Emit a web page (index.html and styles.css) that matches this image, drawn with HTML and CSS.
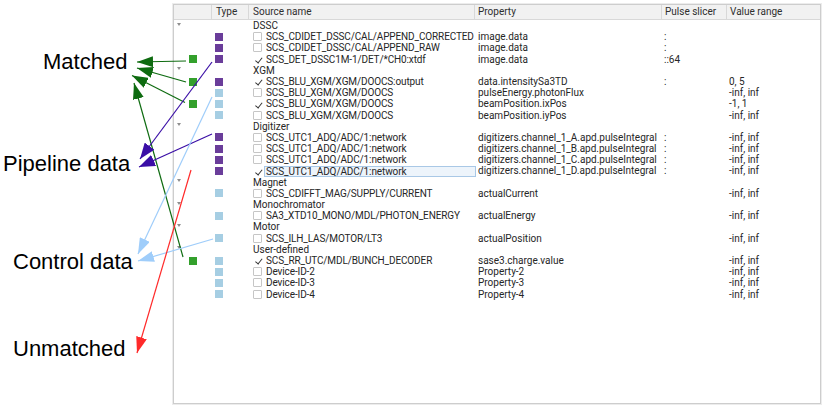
FILE: index.html
```html
<!DOCTYPE html>
<html>
<head>
<meta charset="utf-8">
<link rel="stylesheet" href="styles.css">
</head>
<body>
<div class="page">
  <div class="annot">
    <div class="label l-matched">Matched</div>
    <div class="label l-pipeline">Pipeline data</div>
    <div class="label l-control">Control data</div>
    <div class="label l-unmatched">Unmatched</div>
  </div>
  <div class="frame">
    <div class="panel">
      <div class="thead">
        <div class="th"></div>
        <div class="th t-in">Type</div>
        <div class="th t-in">Source name</div>
        <div class="th">Property</div>
        <div class="th">Pulse slicer</div>
        <div class="th">Value range</div>
      </div>
      <div class="tbody">
        <div class="row"><span class="c0"><i class="twisty"></i></span><span class="c1"></span><span class="c2">DSSC</span><span class="c3"></span><span class="c4"></span><span class="c5"></span></div>
        <div class="row"><span class="c0"></span><span class="c1"><i class="sq pipe"></i></span><span class="c2"><i class="cb"></i><span class="nm">SCS_CDIDET_DSSC/CAL/APPEND_CORRECTED</span></span><span class="c3">image.data</span><span class="c4">:</span><span class="c5"></span></div>
        <div class="row"><span class="c0"></span><span class="c1"><i class="sq pipe"></i></span><span class="c2"><i class="cb"></i><span class="nm">SCS_CDIDET_DSSC/CAL/APPEND_RAW</span></span><span class="c3">image.data</span><span class="c4">:</span><span class="c5"></span></div>
        <div class="row"><span class="c0"><i class="sq match"></i></span><span class="c1"><i class="sq pipe"></i></span><span class="c2"><i class="cb on"></i><span class="nm">SCS_DET_DSSC1M-1/DET/*CH0:xtdf</span></span><span class="c3">image.data</span><span class="c4">::64</span><span class="c5"></span></div>

        <div class="row"><span class="c0"><i class="twisty"></i></span><span class="c1"></span><span class="c2">XGM</span><span class="c3"></span><span class="c4"></span><span class="c5"></span></div>
        <div class="row"><span class="c0"><i class="sq match"></i></span><span class="c1"><i class="sq pipe"></i></span><span class="c2"><i class="cb on"></i><span class="nm">SCS_BLU_XGM/XGM/DOOCS:output</span></span><span class="c3">data.intensitySa3TD</span><span class="c4">:</span><span class="c5">0, 5</span></div>
        <div class="row"><span class="c0"></span><span class="c1"><i class="sq ctrl"></i></span><span class="c2"><i class="cb"></i><span class="nm">SCS_BLU_XGM/XGM/DOOCS</span></span><span class="c3">pulseEnergy.photonFlux</span><span class="c4"></span><span class="c5">-inf, inf</span></div>
        <div class="row"><span class="c0"><i class="sq match"></i></span><span class="c1"><i class="sq ctrl"></i></span><span class="c2"><i class="cb on"></i><span class="nm">SCS_BLU_XGM/XGM/DOOCS</span></span><span class="c3">beamPosition.ixPos</span><span class="c4"></span><span class="c5">-1, 1</span></div>
        <div class="row"><span class="c0"></span><span class="c1"><i class="sq ctrl"></i></span><span class="c2"><i class="cb"></i><span class="nm">SCS_BLU_XGM/XGM/DOOCS</span></span><span class="c3">beamPosition.iyPos</span><span class="c4"></span><span class="c5">-inf, inf</span></div>

        <div class="row"><span class="c0"><i class="twisty"></i></span><span class="c1"></span><span class="c2">Digitizer</span><span class="c3"></span><span class="c4"></span><span class="c5"></span></div>
        <div class="row"><span class="c0"></span><span class="c1"><i class="sq pipe"></i></span><span class="c2"><i class="cb"></i><span class="nm">SCS_UTC1_ADQ/ADC/1:network</span></span><span class="c3">digitizers.channel_1_A.apd.pulseIntegral</span><span class="c4">:</span><span class="c5">-inf, inf</span></div>
        <div class="row"><span class="c0"></span><span class="c1"><i class="sq pipe"></i></span><span class="c2"><i class="cb"></i><span class="nm">SCS_UTC1_ADQ/ADC/1:network</span></span><span class="c3">digitizers.channel_1_B.apd.pulseIntegral</span><span class="c4">:</span><span class="c5">-inf, inf</span></div>
        <div class="row"><span class="c0"></span><span class="c1"><i class="sq pipe"></i></span><span class="c2"><i class="cb"></i><span class="nm">SCS_UTC1_ADQ/ADC/1:network</span></span><span class="c3">digitizers.channel_1_C.apd.pulseIntegral</span><span class="c4">:</span><span class="c5">-inf, inf</span></div>
        <div class="row"><span class="c0"></span><span class="c1"><i class="sq pipe"></i></span><span class="c2"><i class="cb on"></i><span class="nm sel">SCS_UTC1_ADQ/ADC/1:network</span></span><span class="c3">digitizers.channel_1_D.apd.pulseIntegral</span><span class="c4">:</span><span class="c5">-inf, inf</span></div>

        <div class="row"><span class="c0"><i class="twisty"></i></span><span class="c1"></span><span class="c2">Magnet</span><span class="c3"></span><span class="c4"></span><span class="c5"></span></div>
        <div class="row"><span class="c0"></span><span class="c1"><i class="sq ctrl"></i></span><span class="c2"><i class="cb"></i><span class="nm">SCS_CDIFFT_MAG/SUPPLY/CURRENT</span></span><span class="c3">actualCurrent</span><span class="c4"></span><span class="c5">-inf, inf</span></div>

        <div class="row"><span class="c0"><i class="twisty"></i></span><span class="c1"></span><span class="c2">Monochromator</span><span class="c3"></span><span class="c4"></span><span class="c5"></span></div>
        <div class="row"><span class="c0"></span><span class="c1"><i class="sq ctrl"></i></span><span class="c2"><i class="cb"></i><span class="nm">SA3_XTD10_MONO/MDL/PHOTON_ENERGY</span></span><span class="c3">actualEnergy</span><span class="c4"></span><span class="c5">-inf, inf</span></div>

        <div class="row"><span class="c0"><i class="twisty"></i></span><span class="c1"></span><span class="c2">Motor</span><span class="c3"></span><span class="c4"></span><span class="c5"></span></div>
        <div class="row"><span class="c0"></span><span class="c1"><i class="sq ctrl"></i></span><span class="c2"><i class="cb"></i><span class="nm">SCS_ILH_LAS/MOTOR/LT3</span></span><span class="c3">actualPosition</span><span class="c4"></span><span class="c5">-inf, inf</span></div>

        <div class="row"><span class="c0"><i class="twisty"></i></span><span class="c1"></span><span class="c2">User-defined</span><span class="c3"></span><span class="c4"></span><span class="c5"></span></div>
        <div class="row"><span class="c0"><i class="sq match"></i></span><span class="c1"><i class="sq ctrl"></i></span><span class="c2"><i class="cb on"></i><span class="nm">SCS_RR_UTC/MDL/BUNCH_DECODER</span></span><span class="c3">sase3.charge.value</span><span class="c4"></span><span class="c5">-inf, inf</span></div>
        <div class="row"><span class="c0"></span><span class="c1"><i class="sq ctrl"></i></span><span class="c2"><i class="cb"></i><span class="nm">Device-ID-2</span></span><span class="c3">Property-2</span><span class="c4"></span><span class="c5">-inf, inf</span></div>
        <div class="row"><span class="c0"></span><span class="c1"><i class="sq ctrl"></i></span><span class="c2"><i class="cb"></i><span class="nm">Device-ID-3</span></span><span class="c3">Property-3</span><span class="c4"></span><span class="c5">-inf, inf</span></div>
        <div class="row"><span class="c0"></span><span class="c1"><i class="sq ctrl"></i></span><span class="c2"><i class="cb"></i><span class="nm">Device-ID-4</span></span><span class="c3">Property-4</span><span class="c4"></span><span class="c5">-inf, inf</span></div>
      </div>
    </div>
  </div>
  <svg class="arrows" width="824" height="409" viewBox="0 0 824 409">
    <defs>
      <marker id="hg" markerUnits="userSpaceOnUse" markerWidth="16" markerHeight="11" refX="16" refY="5.5" orient="auto"><path d="M0,0 L16,5.5 L0,11 z" fill="#0e6b10"/></marker>
      <marker id="hp" markerUnits="userSpaceOnUse" markerWidth="16" markerHeight="12" refX="16" refY="6" orient="auto"><path d="M0,0 L16,6 L0,12 z" fill="#3a0ea6"/></marker>
      <marker id="hb" markerUnits="userSpaceOnUse" markerWidth="16" markerHeight="11" refX="16" refY="5.5" orient="auto"><path d="M0,0 L16,5.5 L0,11 z" fill="#9fcdfa"/></marker>
      <marker id="hr" markerUnits="userSpaceOnUse" markerWidth="16" markerHeight="11" refX="16" refY="5.5" orient="auto"><path d="M0,0 L16,5.5 L0,11 z" fill="#ff2a2a"/></marker>
    </defs>
    <g fill="none" stroke-width="1.2">
      <line x1="186" y1="61" x2="137" y2="62" stroke="#0e6b10" marker-end="url(#hg)"/>
      <line x1="186" y1="82" x2="137" y2="68" stroke="#0e6b10" marker-end="url(#hg)"/>
      <line x1="185" y1="102.5" x2="132" y2="75.5" stroke="#0e6b10" marker-end="url(#hg)"/>
      <line x1="183" y1="257" x2="134" y2="83" stroke="#0e6b10" marker-end="url(#hg)"/>
      <line x1="212" y1="62" x2="140" y2="159" stroke="#3a0ea6" marker-end="url(#hp)"/>
      <line x1="212" y1="134" x2="139" y2="167" stroke="#3a0ea6" marker-end="url(#hp)"/>
      <line x1="212" y1="97" x2="138" y2="254" stroke="#9fcdfa" marker-end="url(#hb)"/>
      <line x1="213" y1="239" x2="138" y2="261" stroke="#9fcdfa" marker-end="url(#hb)"/>
      <line x1="191" y1="170" x2="137" y2="353" stroke="#ff2a2a" marker-end="url(#hr)"/>
    </g>
  </svg>
</div>
</body>
</html>
```
FILE: styles.css
```css
* { box-sizing: border-box; }
body { margin: 0; background: #fff; }

.page {
  position: relative;
  width: 824px;
  height: 409px;
  display: flex;
  overflow: hidden;
}

.annot {
  position: relative;
  width: 172px;
  flex: none;
  font-family: "Liberation Sans", Arial, sans-serif;
  font-size: 22px;
  line-height: 22px;
  color: #000;
}
.label { position: absolute; white-space: nowrap; }
.l-matched { left: 43px; top: 51px; }
.l-pipeline { left: 3px; top: 153px; }
.l-control { left: 13px; top: 251px; }
.l-unmatched { left: 13px; top: 338px; }

.frame {
  margin-top: 3px;
  width: 650px;
  height: 402px;
  padding: 1px;
  background: #ececec;
  flex: none;
}
.panel {
  height: 100%;
  border: 1px solid #cdcdcd;
  background: #fff;
  font-family: Roboto, "Noto Sans", sans-serif;
  font-size: 10px;
  color: #262626;
}

.thead, .row {
  display: grid;
  grid-template-columns: 37px 37px 226px 187px 65px 1fr;
}
.thead {
  height: 15px;
  line-height: 14px;
  background: #f1f1f1;
  border-bottom: 1px solid #d8d8d8;
  color: #2e2e2e;
}
.th { padding-left: 3px; white-space: nowrap; overflow: hidden; }
.th + .th { border-left: 1px solid #d8d8d8; }
.th.t-in { padding-left: 4px; }

.row {
  height: 11.2px;
  line-height: 11.2px;
  align-items: center;
  white-space: nowrap;
}
.row > span { height: 100%; }
.c0 { display: flex; align-items: center; }
.c1 { display: flex; align-items: center; padding-left: 4px; }
.c2 { display: flex; align-items: center; padding-left: 5px; }
.c3 { padding-left: 4px; }
.c4 { padding-left: 3px; }
.c5 { padding-left: 3px; }

.twisty {
  display: block;
  margin-left: 3px;
  margin-top: -3px;
  width: 0;
  height: 0;
  border-left: 2.5px solid transparent;
  border-right: 2.5px solid transparent;
  border-top: 3px solid #8e8e8e;
}
.c0 .sq { margin-left: 15px; }
.sq { display: block; width: 8px; height: 8px; }
.sq.pipe { background: #6a3d9a; }
.sq.ctrl { background: #a6cee3; }
.sq.match { background: #33a02c; }

.cb {
  display: block;
  flex: none;
  position: relative;
  width: 9px;
  height: 9px;
  margin-right: 4px;
  border: 1px solid #c6c6c6;
  border-radius: 1px;
  background: #fff;
}
.cb.on { border-color: transparent; }
.cb.on::after {
  content: "";
  position: absolute;
  left: 2.6px;
  top: 0.2px;
  width: 2.6px;
  height: 5.5px;
  border: solid #333;
  border-width: 0 1.2px 1.2px 0;
  transform: rotate(38deg);
}

.nm { display: block; letter-spacing: -0.12px; }
.nm.sel {
  flex: 1;
  height: 11px;
  line-height: 9px;
  margin-left: -2px;
  margin-right: -2px;
  padding-left: 1px;
  background: #edf4fb;
  border: 1px solid #a9c8e6;
}

.arrows {
  position: absolute;
  left: 0;
  top: 0;
  pointer-events: none;
}
```
